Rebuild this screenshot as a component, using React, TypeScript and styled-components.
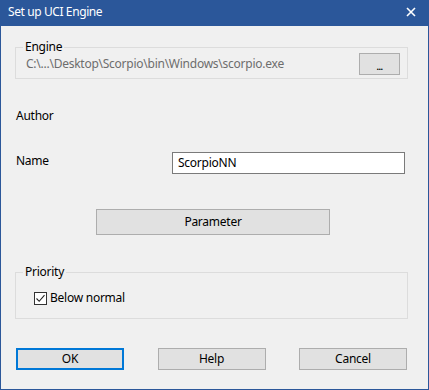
import styled, { createGlobalStyle } from "styled-components";

const GlobalStyle = createGlobalStyle`
  html, body {
    margin: 0;
    padding: 0;
    background: #f0f0f0;
  }
  * {
    box-sizing: border-box;
  }
`;

const Window = styled.div`
  width: 429px;
  height: 390px;
  display: flex;
  flex-direction: column;
  background: #f0f0f0;
  border: 1px solid #2b579a;
  border-top: none;
  font-family: "Noto Sans", "Open Sans", sans-serif;
  font-size: 12px;
  letter-spacing: -0.25px;
  color: #000;
`;

const TitleBar = styled.div`
  height: 26px;
  flex: none;
  display: flex;
  align-items: center;
  justify-content: space-between;
  background: #2b579a;
  color: #fff;
  padding: 0 12px 2px 8px;
  margin: 0 -1px;
`;

const TitleText = styled.span`
  line-height: 16px;
  letter-spacing: -0.4px;
`;

const CloseBtn = styled.div`
  width: 12px;
  height: 12px;
  display: flex;
  align-items: center;
  justify-content: center;
`;

const Body = styled.div`
  flex: 1;
  display: flex;
  flex-direction: column;
  padding: 15px 20px 0 14px;
`;

const Group = styled.fieldset<{ $pad: string }>`
  margin: 0;
  padding: ${(p) => p.$pad};
  border: 1px solid #dcdcdc;
  min-width: 0;

  legend {
    margin-left: 7px;
    padding: 0 2px;
    line-height: 12px;
  }
`;

const EngineRow = styled.div`
  display: flex;
  align-items: center;
  justify-content: space-between;
  padding-left: 10px;
`;

const PathText = styled.span`
  color: #6d6d6d;
  line-height: 16px;
  margin-top: -1px;
`;

const Button = styled.button<{ $w: number; $h: number; $default?: boolean }>`
  width: ${(p) => p.$w}px;
  height: ${(p) => p.$h}px;
  background: #e1e1e1;
  border: ${(p) => (p.$default ? "2px solid #0078d7" : "1px solid #adadad")};
  font-family: inherit;
  font-size: 12px;
  letter-spacing: inherit;
  color: #000;
  padding: 0;
  line-height: 14px;
`;

const Dots = styled.span`
  font-size: 9px;
  font-weight: 700;
  letter-spacing: -0.5px;
  position: relative;
  top: 2px;
`;

const Label = styled.span`
  line-height: 16px;
`;

const AuthorRow = styled.div`
  margin-top: 29px;
  padding-left: 1px;
  display: flex;
`;

const NameRow = styled.div`
  margin-top: 28px;
  padding-left: 1px;
  display: flex;
  align-items: flex-start;
  justify-content: space-between;
`;

const NameLabel = styled(Label)`
  margin-top: 1px;
`;

const TextInput = styled.input`
  width: 233px;
  height: 22px;
  margin-right: 3px;
  border: 1px solid #7a7a7a;
  background: #fff;
  font-family: inherit;
  font-size: 12px;
  letter-spacing: inherit;
  padding: 0 0 1px 5px;
  color: #000;
  outline: none;
`;

const ParamRow = styled.div`
  margin-top: 35px;
  display: flex;
  padding-left: 81px;
`;

const PriorityWrap = styled.div`
  margin-top: 31px;
`;

const CheckRow = styled.label`
  display: flex;
  align-items: center;
  gap: 3px;
  padding-left: 18px;
  line-height: 16px;
`;

const Box = styled.span`
  width: 13px;
  height: 13px;
  border: 1px solid #333;
  background: #fff;
  display: flex;
  align-items: center;
  justify-content: center;
`;

const ButtonRow = styled.div`
  margin-top: 29px;
  display: flex;
  justify-content: space-between;
  padding: 0 1px 0 1px;
`;

export default function App() {
  return (
    <>
      <GlobalStyle />
      <Window>
        <TitleBar>
          <TitleText>Set up UCI Engine</TitleText>
          <CloseBtn>
            <svg width="10" height="10" viewBox="0 0 10 10">
              <path d="M1 1 L9 9 M9 1 L1 9" stroke="#fff" strokeWidth="1.6" />
            </svg>
          </CloseBtn>
        </TitleBar>
        <Body>
          <Group $pad="0 7px 3px 0">
            <legend>Engine</legend>
            <EngineRow>
              <PathText>C:\...\Desktop\Scorpio\bin\Windows\scorpio.exe</PathText>
              <Button $w={41} $h={22}>
                <Dots>...</Dots>
              </Button>
            </EngineRow>
          </Group>

          <AuthorRow>
            <Label>Author</Label>
          </AuthorRow>

          <NameRow>
            <NameLabel>Name</NameLabel>
            <TextInput defaultValue="ScorpioNN" />
          </NameRow>

          <ParamRow>
            <Button $w={234} $h={26}>Parameter</Button>
          </ParamRow>

          <PriorityWrap>
            <Group $pad="12px 7px 12px 0">
              <legend>Priority</legend>
              <CheckRow>
                <Box>
                  <svg width="11" height="11" viewBox="0 0 11 11">
                    <path d="M1.5 5.5 L4.2 8.3 L9.5 2.2" stroke="#222" strokeWidth="1.1" fill="none" />
                  </svg>
                </Box>
                Below normal
              </CheckRow>
            </Group>
          </PriorityWrap>

          <ButtonRow>
            <Button $w={108} $h={22} $default>OK</Button>
            <Button $w={108} $h={22}>Help</Button>
            <Button $w={108} $h={22}>Cancel</Button>
          </ButtonRow>
        </Body>
      </Window>
    </>
  );
}
